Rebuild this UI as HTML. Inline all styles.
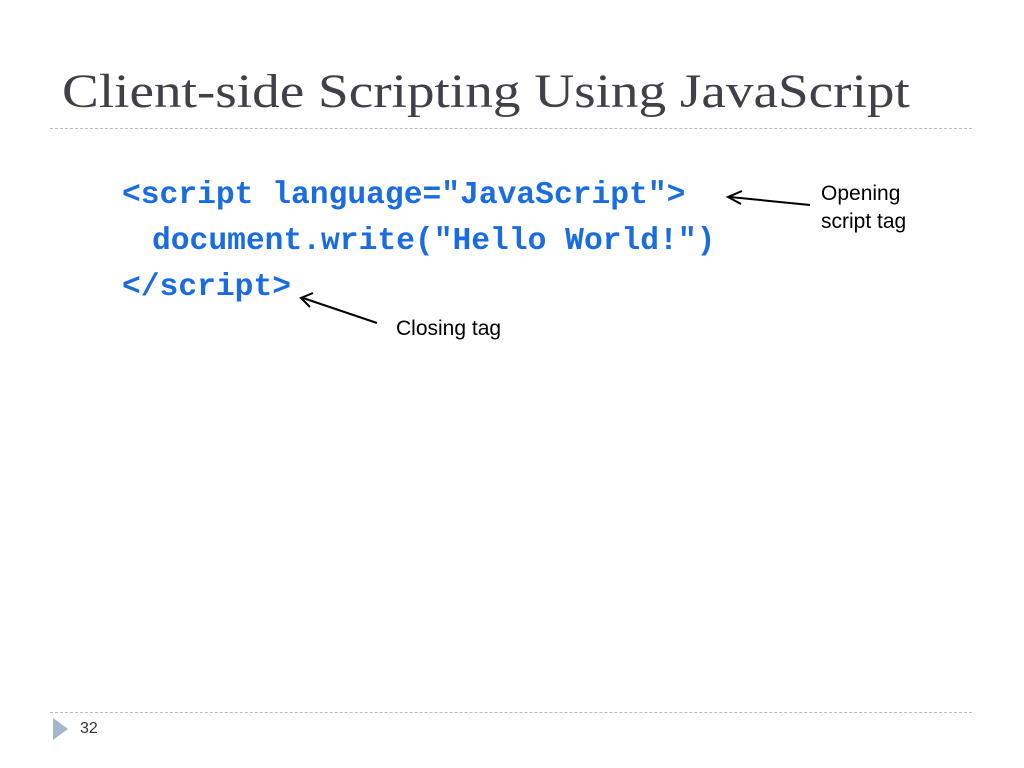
<!DOCTYPE html>
<html><head><style>
body{margin:0;width:1024px;height:768px;background:#fff;position:relative;overflow:hidden}
.t{position:absolute;left:62px;top:64px;font:48px "Liberation Serif",serif;color:#404048;white-space:nowrap;transform:scaleX(1.15);transform-origin:0 0}
.d{position:absolute;left:50px;width:922px;border-top:1px dashed #b8bcc4}
.c{position:absolute;font:bold 31.3px "Liberation Mono",monospace;color:#1a6de0;white-space:pre;line-height:46px}
.s{position:absolute;font:21px "Liberation Sans",sans-serif;color:#000;line-height:28px}
</style></head><body>
<div class="t">Client-side Scripting Using JavaScript</div>
<div class="d" style="top:128px"></div>
<div class="c" style="left:122px;top:173px">&lt;script language="JavaScript"&gt;</div>
<div class="c" style="left:152px;top:219px">document.write("Hello World!")</div>
<div class="c" style="left:122px;top:265px">&lt;/script&gt;</div>
<div class="s" style="left:821px;top:180px">Opening<br>script tag</div>
<div class="s" style="left:396px;top:315px">Closing tag</div>
<svg style="position:absolute;left:0;top:0" width="1024" height="768">
<g stroke="#000" stroke-width="2" fill="none">
<line x1="810" y1="205" x2="730" y2="197"/>
<polyline points="742,191 728,197 741,204"/>
<line x1="377" y1="323" x2="303" y2="298"/>
<polyline points="313,293 301,298 310,307"/>
</g>
<polygon points="53,718 53,740 68,729" fill="#a3b7cf"/>
</svg>
<div class="d" style="top:712px"></div>
<div style="position:absolute;left:80px;top:720px;font:16px 'Liberation Sans',sans-serif;color:#333">32</div>
</body></html>
